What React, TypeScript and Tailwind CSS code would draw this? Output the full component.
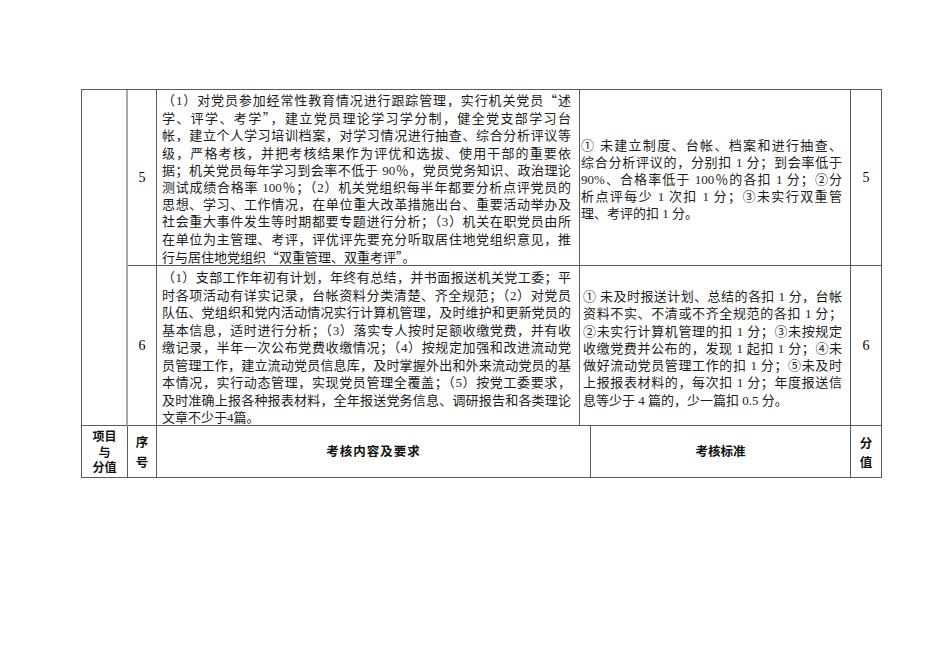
import React from "react";

const row5Content = [
  "（1）对党员参加经常性教育情况进行跟踪管理，实行机关党员“述",
  "学、评学、考学”，建立党员理论学习学分制，健全党支部学习台",
  "帐，建立个人学习培训档案，对学习情况进行抽查、综合分析评议等",
  "级，严格考核，并把考核结果作为评优和选拔、使用干部的重要依",
  "据；机关党员每年学习到会率不低于 90％，党员党务知识、政治理论",
  "测试成绩合格率 100％；（2）机关党组织每半年都要分析点评党员的",
  "思想、学习、工作情况，在单位重大改革措施出台、重要活动举办及",
  "社会重大事件发生等时期都要专题进行分析；（3）机关在职党员由所",
  "在单位为主管理、考评，评优评先要充分听取居住地党组织意见，推",
  "行与居住地党组织“双重管理、双重考评”。",
];

const row5Standard = [
  "① 未建立制度、台帐、档案和进行抽查、",
  "综合分析评议的，分别扣 1 分；到会率低于",
  "90%、合格率低于 100％的各扣 1 分；②分",
  "析点评每少 1 次扣 1 分；③未实行双重管",
  "理、考评的扣 1 分。",
];

const row6Content = [
  "（1）支部工作年初有计划，年终有总结，并书面报送机关党工委；平",
  "时各项活动有详实记录，台帐资料分类清楚、齐全规范；（2）对党员",
  "队伍、党组织和党内活动情况实行计算机管理，及时维护和更新党员的",
  "基本信息，适时进行分析；（3）落实专人按时足额收缴党费，并有收",
  "缴记录，半年一次公布党费收缴情况；（4）按规定加强和改进流动党",
  "员管理工作，建立流动党员信息库，及时掌握外出和外来流动党员的基",
  "本情况，实行动态管理，实现党员管理全覆盖；（5）按党工委要求，",
  "及时准确上报各种报表材料，全年报送党务信息、调研报告和各类理论",
  "文章不少于4篇。",
];

const row6Standard = [
  "① 未及时报送计划、总结的各扣 1 分，台帐",
  "资料不实、不清或不齐全规范的各扣 1 分；",
  "②未实行计算机管理的扣 1 分；③未按规定",
  "收缴党费并公布的，发现 1 起扣 1 分；④未",
  "做好流动党员管理工作的扣 1 分；⑤未及时",
  "上报报表材料的，每次扣 1 分；年度报送信",
  "息等少于 4 篇的，少一篇扣 0.5 分。",
];

// curly quotes should take the wide CJK form, not the serif one
const withQuotes = (line: string) =>
  line.split(/([“”])/).map((part, i) =>
    part === "“" || part === "”" ? (
      <span key={i} className="font-['Noto_Sans_CJK_SC',sans-serif]">
        {part}
      </span>
    ) : (
      part
    )
  );

// every line but the last one is stretched to the full cell width
const Lines = ({ lines }: { lines: string[] }) => (
  <>
    {lines.map((line, i) => (
      <div
        key={i}
        className={
          i < lines.length - 1
            ? "text-justify [text-align-last:justify]"
            : "text-left"
        }
      >
        {withQuotes(line)}
      </div>
    ))}
  </>
);

const cell = "border-r border-b border-[#5a5a5a]";
const num = `${cell} flex items-center justify-center text-[14px] text-black`;

const App = () => {
  return (
    <div className="min-h-[672px] w-[950px] bg-white pt-[89px] pl-[81px] font-['Liberation_Serif','Noto_Sans_CJK_SC',serif] text-[13px] text-[#1c1c1c]">
      <div className="grid w-fit grid-cols-[46px_29px_423px_271px_31px] grid-rows-[176px_160px] border-t border-l border-[#5a5a5a]">
        <div className="row-span-2 border-b border-r-2 border-[#5a5a5a] border-r-[#a8a8a8]" />

        <div className={num}>5</div>
        <div className={`${cell} pt-[1px] pr-[8px] pl-[5px] leading-[17.2px]`}>
          <Lines lines={row5Content} />
        </div>
        <div className={`${cell} flex flex-col justify-center pt-[3px] pr-[8px] pl-[1px] leading-[17px]`}>
          <Lines lines={row5Standard} />
        </div>
        <div className={num}>5</div>

        <div className={num}>6</div>
        <div className={`${cell} pt-[3px] pr-[8px] pl-[5px] leading-[17.5px]`}>
          <Lines lines={row6Content} />
        </div>
        <div className={`${cell} flex flex-col justify-center pt-[6px] pr-[8px] pl-[3px] leading-[17.3px]`}>
          <Lines lines={row6Standard} />
        </div>
        <div className={num}>6</div>
      </div>

      <div className="grid h-[52px] w-fit grid-cols-[46px_29px_434px_260px_31px] border-l border-[#5a5a5a] font-['Noto_Sans_CJK_SC',sans-serif] text-[12.5px] font-bold text-[#111]">
        <div className={`${cell} flex flex-col items-center justify-center text-[12px] leading-[15.5px]`}>
          <span>项目</span>
          <span>与</span>
          <span>分值</span>
        </div>
        <div className={`${cell} flex flex-col items-center justify-center leading-[20px]`}>
          <span>序</span>
          <span>号</span>
        </div>
        <div className={`${cell} flex items-center justify-center tracking-[1px]`}>
          考核内容及要求
        </div>
        <div className={`${cell} flex items-center justify-center`}>考核标准</div>
        <div className={`${cell} flex flex-col items-center justify-center leading-[19px]`}>
          <span>分</span>
          <span>值</span>
        </div>
      </div>
    </div>
  );
};

export default App;
